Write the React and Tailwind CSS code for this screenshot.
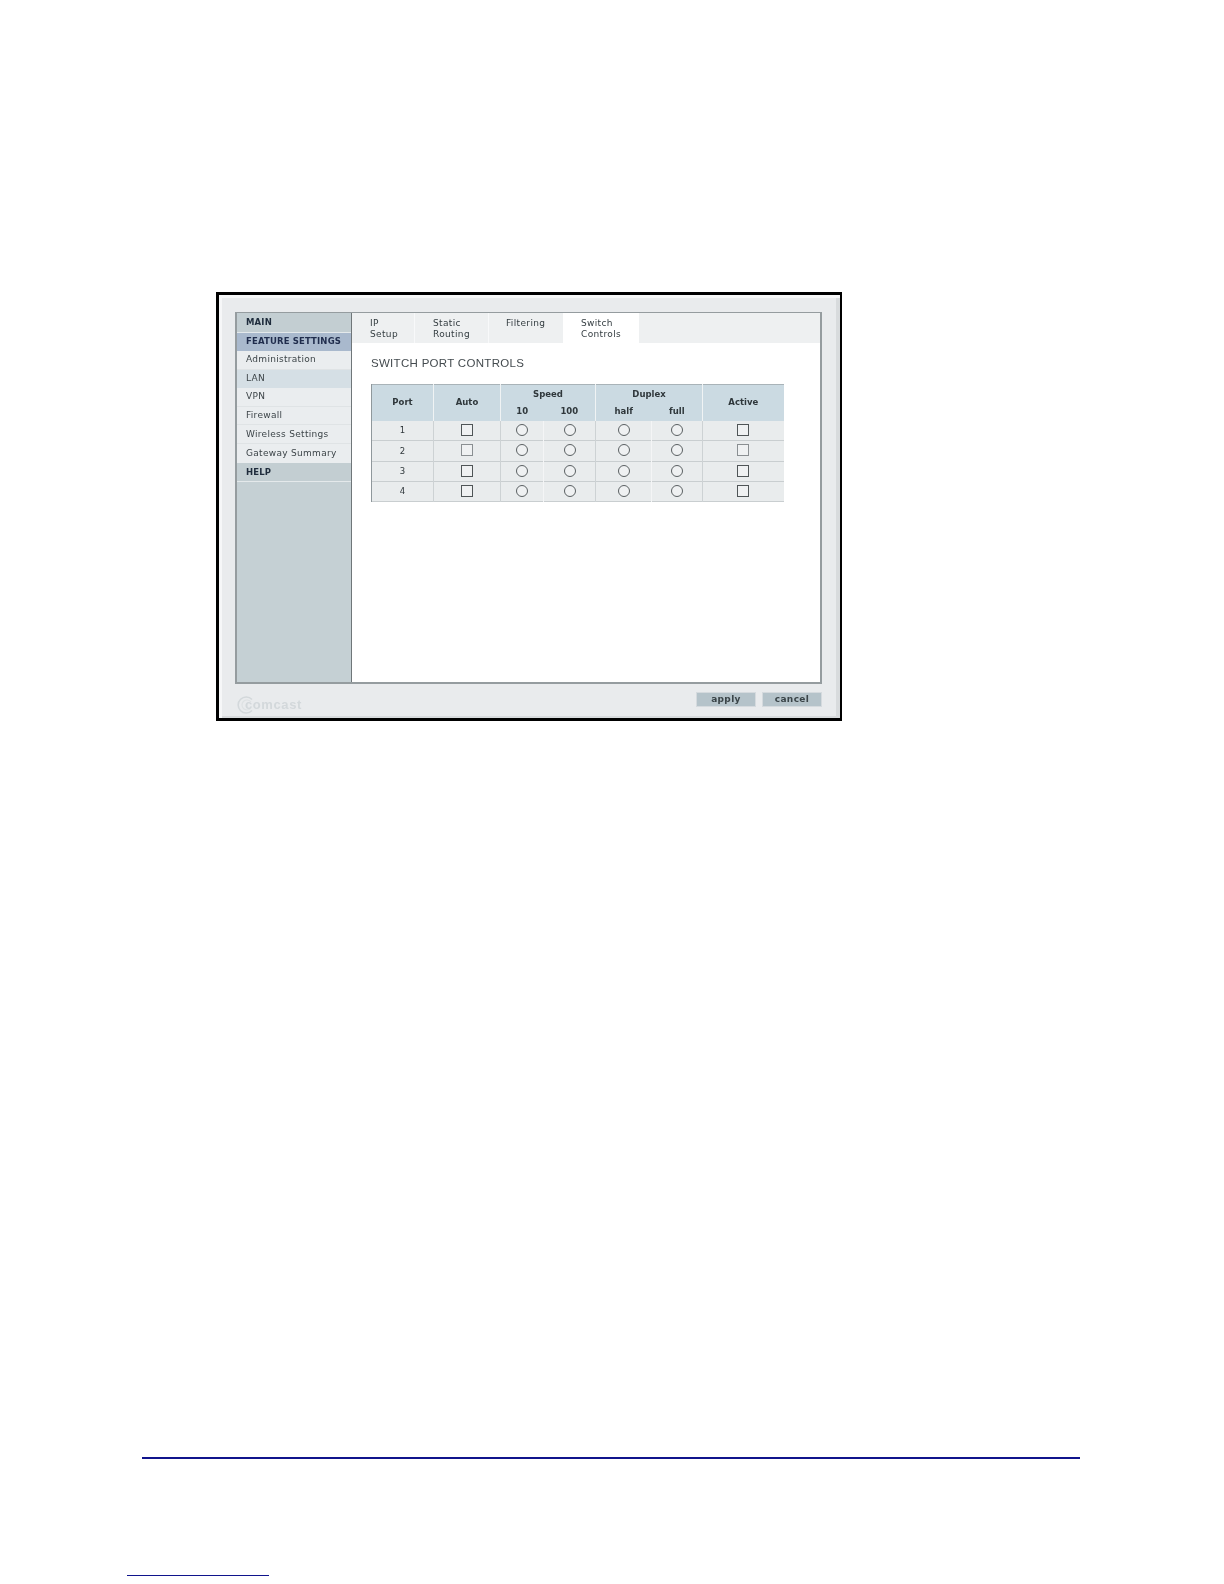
const font = "font-['DejaVu_Sans',sans-serif]"
const boldNav = 'font-bold text-[8.5px] tracking-[0.15px]'

const navItems = [
  { label: 'MAIN', cls: `h-[20px] bg-[#c3ced2] text-[#1f2c3c] border-b border-[#e4e9eb] ${boldNav}` },
  { label: 'FEATURE SETTINGS', cls: `h-[18px] pb-[2px] bg-[#a9b9cd] text-[#1f2c4c] ${boldNav}` },
  { label: 'Administration', cls: 'h-[19px] bg-[#eaedef] text-[#3c4448] border-b border-[#dfe3e5]' },
  { label: 'LAN', cls: 'h-[18px] bg-[#d5dfe5] text-[#3c4448]' },
  { label: 'VPN', cls: 'h-[19px] bg-[#eaedef] text-[#3c4448] border-b border-[#dfe3e5]' },
  { label: 'Firewall', cls: 'h-[18px] bg-[#eaedef] text-[#3c4448] border-b border-[#dfe3e5]' },
  { label: 'Wireless Settings', cls: 'h-[19px] pt-[2px] bg-[#eaedef] text-[#3c4448] border-b border-[#dfe3e5]' },
  { label: 'Gateway Summary', cls: 'h-[19px] bg-[#eaedef] text-[#3c4448]' },
  { label: 'HELP', cls: `h-[19px] bg-[#c3ced2] text-[#1f2c3c] border-b border-[#e4e9eb] ${boldNav}` },
]

const tabs = [
  { lines: ['IP', 'Setup'], cls: 'w-[62px] pl-[18px]' },
  { lines: ['Static', 'Routing'], cls: 'w-[74px] pl-[18px] border-l border-[#f8f9fa]' },
  { lines: ['Filtering'], cls: 'w-[75px] pl-[17px] border-l border-[#f8f9fa]' },
  { lines: ['Switch', 'Controls'], cls: 'w-[76px] pl-[18px] bg-white' },
]

const ports = [1, 2, 3, 4]

function Check({ light }) {
  return <span className={`block mx-auto -mt-[1px] w-[12px] h-[12px] border bg-[#eff1f2] ${light ? 'border-[#8a8f92]' : 'border-[#4f5557]'}`} />
}

function Radio() {
  return <span className="block mx-auto -mt-[1px] w-[12px] h-[12px] rounded-full border border-[#5a6062] bg-[#eff1f2]" />
}

function ComcastLogo() {
  return (
    <div className="flex items-center h-[17px] text-[#d3d8db]">
      <svg width="18" height="18" viewBox="0 0 18 18" className="-mr-[10px] shrink-0">
        <path d="M15 3.5A8 8 0 1 0 15 14.5" fill="none" stroke="#d3d8db" strokeWidth="1.6" />
        <path d="M14 6A5 5 0 1 0 14 12" fill="none" stroke="#dde1e3" strokeWidth="1.2" />
      </svg>
      <span className="text-[13px] font-bold font-['Liberation_Sans',sans-serif] tracking-[0.6px] leading-none">comcast</span>
    </div>
  )
}

export default function App() {
  return (
    <div className="w-[1224px] h-[1584px] bg-white pt-[292px] overflow-hidden">
      {/* router screenshot */}
      <div className={`ml-[216px] w-[626px] h-[429px] border-[3px] border-r-[2px] border-black bg-[#e9ebed] pl-[16px] pt-[17px] blur-[0.45px] shadow-[inset_3px_3px_0_#f6f7f8,inset_-4px_-2px_0_#d8dbdd] ${font}`}>
        <div className="flex w-[587px] h-[372px] border-2 border-t border-[#959c9f] bg-white">
          <aside className="w-[115px] bg-[#c5d0d4] border-r border-[#6f7679] text-[9px] tracking-[0.3px] shrink-0">
            {navItems.map(item => (
              <div key={item.label} className={`flex items-center pl-[9px] ${item.cls}`}>{item.label}</div>
            ))}
          </aside>

          <main className="flex-1 min-w-0">
            <div className="flex h-[30px] bg-[#eef0f1] text-[9px] leading-[11px] tracking-[0.35px] text-[#333c40]">
              {tabs.map(tab => (
                <div key={tab.lines[0]} className={`pt-[5px] ${tab.cls}`}>
                  {tab.lines.map(line => <div key={line}>{line}</div>)}
                </div>
              ))}
            </div>

            <h1 className="ml-[19px] mt-[13px] h-[14px] leading-[14px] text-[11.5px] font-normal text-[#444b4f] font-['Liberation_Sans',sans-serif] tracking-[0.3px]">
              SWITCH PORT CONTROLS
            </h1>

            <table className="ml-[19px] mt-[14px] w-[412px] table-fixed border-collapse text-[8.5px] text-[#2f373b] text-center">
              <colgroup>
                <col className="w-[62px]" />
                <col className="w-[67px]" />
                <col className="w-[43px]" />
                <col className="w-[52px]" />
                <col className="w-[56px]" />
                <col className="w-[51px]" />
                <col className="w-[81px]" />
              </colgroup>
              <thead className="bg-[#cbdae2] font-bold">
                <tr className="h-[18px] border-t border-[#a9b3b8]">
                  <th rowSpan={2} className="border-l border-r border-[#8f989c] border-r-[#f0f3f4]">Port</th>
                  <th rowSpan={2} className="border-r border-[#f0f3f4]">Auto</th>
                  <th colSpan={2} className="pt-[1px] border-r border-[#f0f3f4]">Speed</th>
                  <th colSpan={2} className="pt-[1px] border-r border-[#f0f3f4]">Duplex</th>
                  <th rowSpan={2}>Active</th>
                </tr>
                <tr className="h-[18px]">
                  <th>10</th>
                  <th className="border-r border-[#f0f3f4]">100</th>
                  <th>half</th>
                  <th className="border-r border-[#f0f3f4]">full</th>
                </tr>
              </thead>
              <tbody className="bg-[#e9eced]">
                {ports.map(port => (
                  <tr key={port} className="h-[20.25px] border-b border-[#c9ced0]">
                    <td className="border-l border-r border-[#8f989c] border-r-[#cdd2d4]">{port}</td>
                    <td className="border-r border-[#cdd2d4]"><Check light={port === 2} /></td>
                    <td className="border-r border-[#f4f5f6]"><Radio /></td>
                    <td className="border-r border-[#cdd2d4]"><Radio /></td>
                    <td className="border-r border-[#f4f5f6]"><Radio /></td>
                    <td className="border-r border-[#cdd2d4]"><Radio /></td>
                    <td><Check light={port === 2} /></td>
                  </tr>
                ))}
              </tbody>
            </table>
          </main>
        </div>

        <div className="flex items-start justify-between w-[587px] pl-[2px] pt-[8px]">
          <div className="pt-[4px]"><ComcastLogo /></div>
          <div className="flex gap-[6px] text-[9px] font-bold tracking-[0.35px] text-[#3a4448]">
            <button className="w-[60px] h-[15px] leading-[13px] border border-[#d5dade] bg-[#b5c3ca]">apply</button>
            <button className="w-[60px] h-[15px] leading-[13px] border border-[#d5dade] bg-[#b5c3ca]">cancel</button>
          </div>
        </div>
      </div>

      {/* page rules */}
      <div className="ml-[142px] mt-[736px] w-[938px] h-[1.5px] bg-[#10148c]" />
      <div className="ml-[127px] mt-[116px] w-[142px] h-[1.5px] bg-[#10148c]" />
    </div>
  )
}
